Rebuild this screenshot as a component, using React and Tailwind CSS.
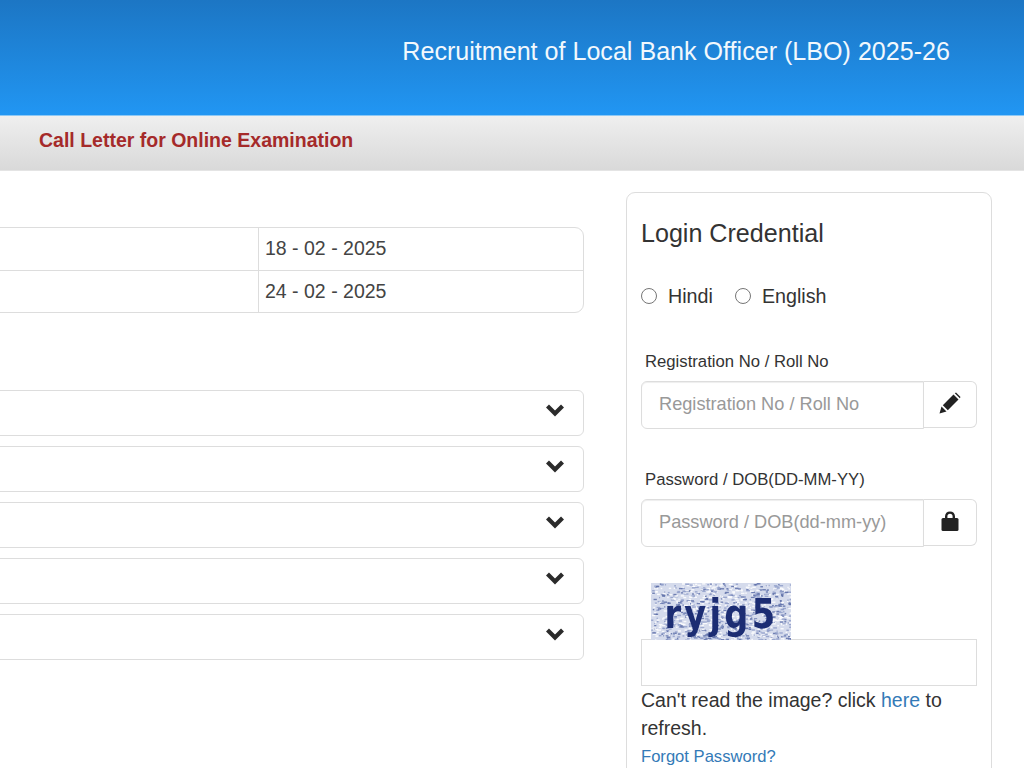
// deterministic speckle for the captcha background
const hash = (n) => {
  const s = Math.sin(n * 12.9898) * 43758.5453;
  return s - Math.floor(s);
};
const noise = Array.from({ length: 1100 }, (_, i) => ({
  x: hash(i + 1) * 140,
  y: hash(i + 5000) * 57,
  w: 1 + hash(i + 9000) * 3,
  c: hash(i + 300) < 0.3 ? "#5d6fa8" : hash(i + 300) < 0.6 ? "#8f9dc9" : "#ffffff",
}));

const dates = ["18 - 02 - 2025", "24 - 02 - 2025"];
const panels = [0, 1, 2, 3, 4];

function Captcha() {
  return (
    <div className="relative w-[140px] h-[57px] overflow-hidden ml-[10px]">
      <svg width="140" height="57" className="block blur-[0.6px]" aria-hidden="true">
        <rect width="140" height="57" fill="#d5dbec" />
        {noise.map((n, i) => (
          <rect key={i} x={n.x} y={n.y} width={n.w} height="1.4" fill={n.c} opacity="0.85" />
        ))}
      </svg>
      <div className="absolute inset-0 flex items-center justify-center pt-[6px] text-[41px] leading-none font-bold tracking-[4px] text-[#1c2d73] blur-[0.5px] font-['DejaVu_Sans',sans-serif]">
        <span className="scale-x-[0.82]">ryjg5</span>
      </div>
    </div>
  );
}

function PencilIcon() {
  return (
    <svg width="22" height="22" viewBox="0 0 22 22" fill="#222" aria-hidden="true">
      <path d="M0.5 21.5 L2.5 14.5 L7.5 19.5 Z" />
      <path d="M3.8 13.2 L14.5 2.5 L19.5 7.5 L8.8 18.2 Z" />
      <path d="M15.8 1.2 L17 0.5 L21.5 5 L20.8 6.2 Z" />
    </svg>
  );
}

function LockIcon() {
  return (
    <svg width="18" height="20" viewBox="0 0 18 20" fill="#222" aria-hidden="true">
      <path d="M4 8 V5.5 C4 2.4 6 0.5 9 0.5 C12 0.5 14 2.4 14 5.5 V8 H11.6 V5.5 C11.6 3.8 10.6 2.8 9 2.8 C7.4 2.8 6.4 3.8 6.4 5.5 V8 Z" />
      <rect x="0.5" y="7" width="17" height="13" rx="1.5" />
    </svg>
  );
}

function ChevronIcon() {
  return (
    <svg width="20" height="14" viewBox="0 0 20 14" fill="none" stroke="#2b2b2b" strokeWidth="4.2" aria-hidden="true">
      <path d="M2.5 3 L10 10.5 L17.5 3" />
    </svg>
  );
}

function InputGroup({ label, placeholder, children, className }) {
  return (
    <div className={className}>
      <label className="block pl-[4px] text-[16.7px] leading-[22px] text-[#333]">{label}</label>
      <div className="flex h-[47px] mt-[8px]">
        <div className="w-[283px] h-[48px] border border-[#ddd] rounded-l-[6px] pl-[17px] flex items-center text-[18.2px] text-[#999] shadow-[inset_0_1px_1px_rgba(0,0,0,0.07)]">
          {placeholder}
        </div>
        <div className="flex-1 border border-l-0 border-[#ddd] rounded-r-[6px] flex items-center justify-center pb-[4px] text-[#222]">
          {children}
        </div>
      </div>
    </div>
  );
}

export default function App() {
  return (
    <div className="w-[1024px] h-[768px] overflow-hidden bg-white font-['Liberation_Sans',sans-serif] text-[#333]">
      <header className="h-[116px] bg-gradient-to-b from-[#1c76c4] to-[#2196f3] border-b border-[#8cc8f5] flex justify-end pt-[35px] pr-[74px]">
        <h1 className="text-[25.1px] leading-[32px] text-[#f2f8fd]">Recruitment of Local Bank Officer (LBO) 2025-26</h1>
      </header>
      <div className="h-[55px] bg-gradient-to-b from-[#efefef] to-[#d9d9d9] border-b border-[#e4e4e4] pl-[39px] pt-[12px]">
        <h2 className="text-[19.5px] leading-[24px] font-bold text-[#a52a2a]">Call Letter for Online Examination</h2>
      </div>

      <div className="flex pt-[21px]">
        <main className="w-[584px] shrink-0 pt-[35px]">
          <div className="-ml-4 border border-[#ddd] rounded-[9px]">
            {dates.map((d, i) => (
              <div key={d} className={`flex ${i === 0 ? "h-[43px] border-b border-[#ddd]" : "h-[41px]"}`}>
                <div className="w-[274px] border-r border-[#ddd]" />
                <div className="pl-[6px] flex items-center text-[19.5px] text-[#444]">{d}</div>
              </div>
            ))}
          </div>
          <div className="mt-[77px] flex flex-col gap-[9.8px]">
            {panels.map((p) => (
              <div key={p} className="-ml-4 h-[46.2px] border border-[#ddd] rounded-[6px] flex items-center justify-end pr-[18px] pb-[7px]">
                <ChevronIcon />
              </div>
            ))}
          </div>
        </main>

        <aside className="ml-[42px] w-[366px] h-[600px] shrink-0 border border-[#ddd] rounded-[9px] px-[14px] pt-[24px]">
          <h3 className="text-[25.1px] leading-[32px] text-[#333]">Login Credential</h3>
          <div className="flex items-center mt-[33px] text-[19.7px] leading-[28px]">
            <span className="w-[16px] h-[16px] rounded-full border border-[#767676]" />
            <span className="ml-[11px]">Hindi</span>
            <span className="ml-[22px] w-[16px] h-[16px] rounded-full border border-[#767676]" />
            <span className="ml-[11px]">English</span>
          </div>
          <InputGroup label="Registration No / Roll No" placeholder="Registration No / Roll No" className="mt-[41px]">
            <PencilIcon />
          </InputGroup>
          <InputGroup label="Password / DOB(DD-MM-YY)" placeholder="Password / DOB(dd-mm-yy)" className="mt-[41px]">
            <LockIcon />
          </InputGroup>
          <div className="mt-[37px]">
            <Captcha />
          </div>
          <div className="h-[47px] border border-[#ddd] -mt-[1px]" />
          <p className="text-[19.5px] leading-[28px] text-[#333]">
            Can't read the image? click <a className="text-[#337ab7]">here</a> to refresh.
          </p>
          <a className="block text-[16.6px] leading-[24px] mt-[3px] text-[#337ab7]">Forgot Password?</a>
        </aside>
      </div>
    </div>
  );
}
